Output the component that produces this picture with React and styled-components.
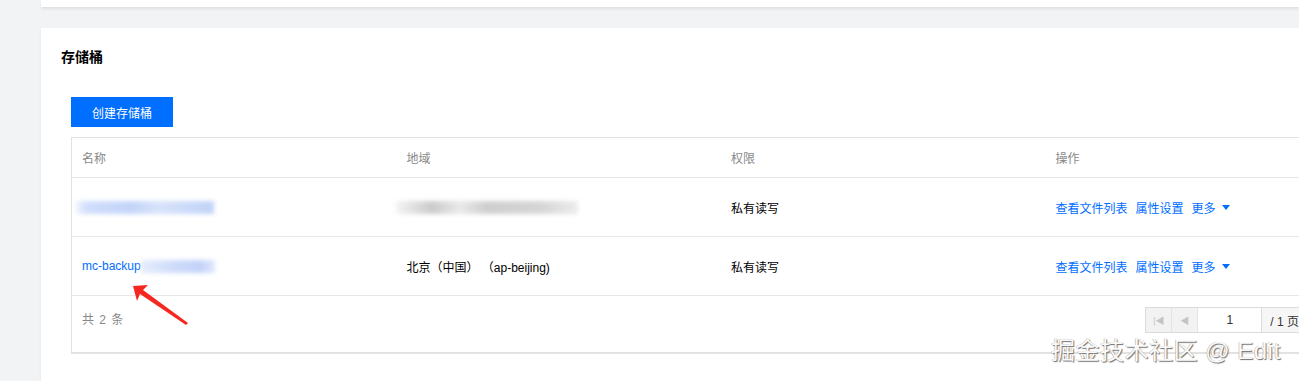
import React from 'react';
import styled, { createGlobalStyle } from 'styled-components';

const GlobalStyle = createGlobalStyle`
	html, body {
		margin: 0;
		padding: 0;
		background: #f2f3f5;
		overflow: hidden;
		font-family: Arial, "Liberation Sans", "Noto Sans CJK SC", sans-serif;
	}
`;

const Page = styled.div`
	position: relative;
	width: 1299px;
	height: 381px;
	padding-left: 41px;
	box-sizing: border-box;
	overflow: hidden;
`;

const TopCard = styled.div`
	height: 7px;
	background: #fff;
	box-shadow: 0 2px 3px rgba(0, 0, 0, 0.08);
`;

const Card = styled.section`
	margin-top: 21px;
	background: #fff;
	padding: 19px 0 30px 20px;
	box-shadow: 0 1px 3px rgba(0, 0, 0, 0.06);
`;

const Title = styled.h2`
	margin: 0;
	font-size: 14px;
	line-height: 20px;
	font-weight: 700;
	color: #000;
`;

const Body = styled.div`
	padding-left: 10px;
	margin-top: 30px;
`;

const PrimaryButton = styled.button`
	width: 102px;
	height: 30px;
	border: 0;
	background: #006eff;
	color: #fff;
	font-size: 12px;
	font-family: inherit;
	padding: 0;
	cursor: pointer;
`;

const Table = styled.div`
	margin-top: 10px;
	width: 1298px;
	border: 1px solid #e2e2e2;
	border-right: 0;
`;

const Row = styled.div`
	display: grid;
	grid-template-columns: repeat(4, 324.5px);
	height: ${({ h }) => h}px;
	box-sizing: border-box;
	align-items: center;
	border-bottom: 1px solid #e7e7e7;
	font-size: 12px;
	color: ${({ head }) => (head ? '#888' : '#000')};
`;

const Cell = styled.div`
	padding-left: 10px;
	display: flex;
	align-items: center;
	white-space: nowrap;
`;

const Link = styled.a`
	color: #006eff;
	text-decoration: none;
	margin-right: 8px;
	cursor: pointer;
`;

const Caret = styled.span`
	display: inline-block;
	margin-left: 6px;
	width: 0;
	height: 0;
	border-left: 4px solid transparent;
	border-right: 4px solid transparent;
	border-top: 5px solid #006eff;
`;

const Blur = styled.span`
	display: inline-block;
	width: ${({ w }) => w}px;
	height: 13px;
	margin-left: ${({ ml }) => ml || 0}px;
	background: ${({ bg }) => bg};
	filter: blur(2px);
	opacity: 0.85;
`;

const Footer = styled.div`
	height: 57px;
	display: flex;
	justify-content: space-between;
	align-items: flex-start;
	padding: 11px 0 0 10px;
	box-sizing: border-box;
	border-bottom: 1px solid #e2e2e2;
`;

const Total = styled.span`
	font-size: 12px;
	line-height: 26px;
	color: #888;
	letter-spacing: 1px;
`;

const Pager = styled.div`
	display: flex;
	margin-right: 10px;
	height: 26px;
	border: 1px solid #dcdcdc;
	box-sizing: border-box;
`;

const PageBtn = styled.span`
	width: 25px;
	display: flex;
	align-items: center;
	justify-content: center;
	background: #f2f2f2;
	border-right: 1px solid #e4e4e4;
	color: #c4c4c4;
	font-size: 9px;
`;

const PageInput = styled.span`
	width: 63px;
	display: flex;
	align-items: center;
	justify-content: center;
	background: #fff;
	border-right: 1px solid #dcdcdc;
	font-size: 12px;
	color: #333;
`;

const PageTotal = styled.span`
	padding: 0 8px;
	display: flex;
	align-items: center;
	background: #f6f6f6;
	font-size: 12px;
	color: #333;
`;

const Arrow = styled.svg`
	position: absolute;
	left: 128px;
	top: 280px;
`;

const Watermark = styled.div`
	position: absolute;
	left: 1051px;
	top: 336px;
	font-size: 24px;
	line-height: 30px;
	color: #fafafa;
	text-shadow: 1px 1px 1px #6f6f6f, -0.5px -0.5px 0.5px #aaa;
	white-space: nowrap;
	letter-spacing: 0.5px;
`;

function Ops() {
	return (
		<Cell>
			<Link>查看文件列表</Link>
			<Link>属性设置</Link>
			<Link style={{ marginRight: 0 }}>更多</Link>
			<Caret />
		</Cell>
	);
}

export default function App() {
	return (
		<Page>
			<GlobalStyle />
			<TopCard />
			<Card>
				<Title>存储桶</Title>
				<Body>
					<PrimaryButton>创建存储桶</PrimaryButton>
					<Table>
						<Row head h={40}>
							<Cell>名称</Cell>
							<Cell>地域</Cell>
							<Cell>权限</Cell>
							<Cell>操作</Cell>
						</Row>
						<Row h={59}>
							<Cell>
								<Blur w={138} ml={-6} bg="linear-gradient(90deg,#eef2fd,#c9d8fb 8%,#b9cdf8 40%,#d2def9 60%,#b6cbf7)" />
							</Cell>
							<Cell>
								<Blur w={182} ml={-11} bg="linear-gradient(90deg,#f2f2f2,#c2c2c2 20%,#e6e6e6 35%,#c6c6c6 50%,#cfcfcf 80%,#e9e9e9)" />
							</Cell>
							<Cell>私有读写</Cell>
							<Ops />
						</Row>
						<Row h={59}>
							<Cell>
								<Link style={{ marginRight: 0 }}>mc-backup</Link>
								<Blur w={74} bg="linear-gradient(90deg,#e1e9fc,#c3d4f9 50%,#b9cbf7 80%,#dbe5fb)" />
							</Cell>
							<Cell>北京（中国） （ap-beijing)</Cell>
							<Cell>私有读写</Cell>
							<Ops />
						</Row>
						<Footer>
							<Total>共 2 条</Total>
							<Pager>
								<PageBtn>|◀</PageBtn>
								<PageBtn>◀</PageBtn>
								<PageInput>1</PageInput>
								<PageTotal>/ 1 页</PageTotal>
								<PageBtn>▶</PageBtn>
								<PageBtn>▶|</PageBtn>
							</Pager>
						</Footer>
					</Table>
				</Body>
			</Card>
			<Arrow width="64" height="48" viewBox="0 0 64 48">
				<path d="M5 6 L20 5 L15 10 L60 43 L58 45 L12 14 L9 21 Z" fill="#f5281f" />
			</Arrow>
			<Watermark>掘金技术社区 @ Edit</Watermark>
		</Page>
	);
}
